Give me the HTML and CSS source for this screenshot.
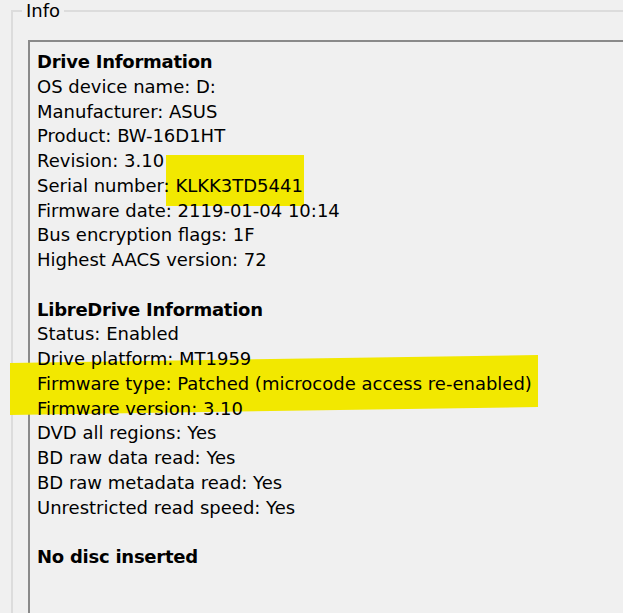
FILE: index.html
```html
<!DOCTYPE html>
<html>
<head>
<meta charset="utf-8">
<link rel="stylesheet" href="styles.css">
</head>
<body>
<fieldset class="group">
  <legend class="group-title">Info</legend>
  <div class="info-box">
    <div class="mark mark-serial"></div>
    <div class="mark mark-firmware"></div>
    <section class="section">
      <div class="heading">Drive Information</div>
      <div class="line">OS device name: D:</div>
      <div class="line">Manufacturer: ASUS</div>
      <div class="line">Product: BW-16D1HT</div>
      <div class="line">Revision: 3.10</div>
      <div class="line">Serial number: KLKK3TD5441</div>
      <div class="line">Firmware date: 2119-01-04 10:14</div>
      <div class="line">Bus encryption flags: 1F</div>
      <div class="line">Highest AACS version: 72</div>
    </section>
    <section class="section">
      <div class="heading">LibreDrive Information</div>
      <div class="line">Status: Enabled</div>
      <div class="line">Drive platform: MT1959</div>
      <div class="line">Firmware type: Patched (microcode access re-enabled)</div>
      <div class="line">Firmware version: 3.10</div>
      <div class="line">DVD all regions: Yes</div>
      <div class="line">BD raw data read: Yes</div>
      <div class="line">BD raw metadata read: Yes</div>
      <div class="line">Unrestricted read speed: Yes</div>
    </section>
    <section class="section">
      <div class="heading">No disc inserted</div>
    </section>
  </div>
</fieldset>
</body>
</html>
```
FILE: styles.css
```css
html, body {
  margin: 0;
  height: 100%;
  overflow: hidden;
}
body {
  padding-top: 1px;
  background: #f0f0f0;
  color: #000;
  font-family: "DejaVu Sans", sans-serif;
  font-size: 18px;
  box-sizing: border-box;
}
.group {
  box-sizing: border-box;
  margin: 0 0 0 11px;
  padding: 0;
  border: 2px solid #dcdcdc;
  border-right: none;
  border-bottom: none;
  min-width: 0;
  height: 612px;
}
.group-title {
  margin-left: 9px;
  padding: 0 4px;
  line-height: 20px;
  font-size: 18px;
}
.info-box {
  box-sizing: border-box;
  position: relative;
  z-index: 0;
  margin: 19px 0 0 15px;
  padding: 8px 0 0 7px;
  border-top: 2px solid #8a8a8a;
  border-left: 2px solid #8a8a8a;
  height: 573px;
  white-space: nowrap;
}
.section {
  margin-bottom: 24.75px;
}
.line, .heading {
  line-height: 24.75px;
}
.heading {
  font-weight: bold;
  letter-spacing: -0.25px;
}
.mark {
  position: absolute;
  z-index: -1;
  background: #f2e800;
}
.mark-serial {
  left: 136px;
  top: 113px;
  width: 138px;
  height: 51px;
}
.mark-firmware {
  left: -20px;
  top: 313px;
  width: 528px;
  height: 60px;
  clip-path: polygon(0 8px, 100% 0, 100% 52px, 0 100%);
}
```
